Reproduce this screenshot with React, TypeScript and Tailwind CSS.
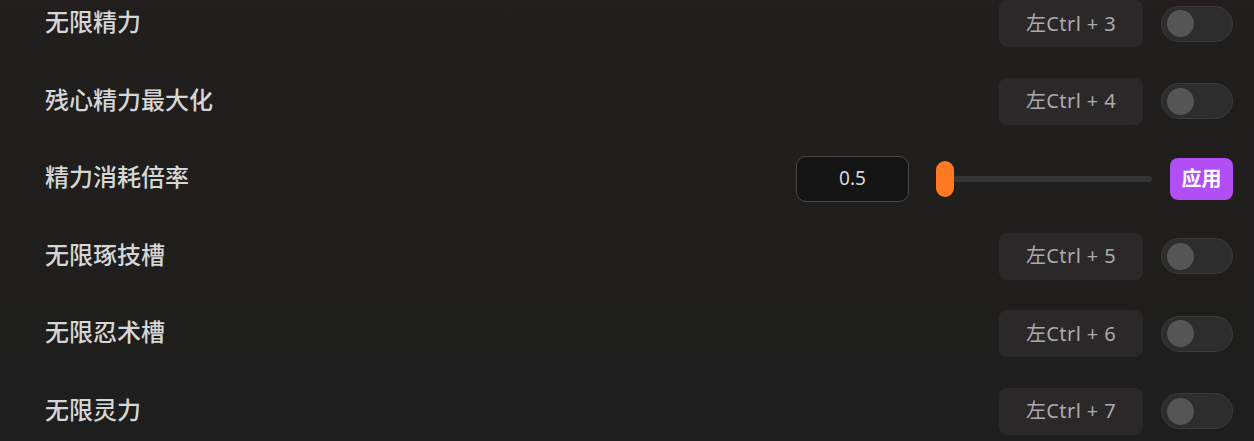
import React from "react";

const font = { fontFamily: '"Noto Sans", "Noto Sans CJK SC", sans-serif' };

function Toggle() {
  return (
    <div className="w-[72px] h-[36px] rounded-full bg-[#2d2d2d] border border-[#3a3a3a] flex items-center pl-[5px] shrink-0">
      <div className="w-[27px] h-[27px] rounded-full bg-[#555555]" />
    </div>
  );
}

function KeyRow({ label, k }: { label: string; k: string }) {
  return (
    <div className="h-[47px] flex items-center">
      <div className="flex-1 text-[24px] leading-none font-medium text-[#d6d6d6] -mt-[3px]">{label}</div>
      <div className="w-[144px] h-[47px] rounded-[8px] bg-[#2a2828] flex items-center justify-center text-[20px] tracking-[0.4px] text-[#ababab]">
        {k}
      </div>
      <div className="w-[18px]" />
      <Toggle />
    </div>
  );
}

function SliderRow() {
  return (
    <div className="h-[47px] flex items-center">
      <div className="flex-1 text-[24px] leading-none font-medium text-[#d6d6d6] -mt-[3px]">精力消耗倍率</div>
      <div className="w-[113px] h-[46px] rounded-[10px] bg-[#141414] border border-[#474747] flex items-center justify-center text-[19px] text-[#d8d8d8]">
        0.5
      </div>
      <div className="w-[27px]" />
      <div className="w-[216px] h-[36px] flex items-center relative">
        <div className="absolute left-[9px] right-0 h-[6px] rounded-full bg-[#343434]" />
        <div className="relative w-[18px] h-[36px] rounded-full bg-[#ff7a21]" />
      </div>
      <div className="w-[18px]" />
      <div className="w-[63px] h-[42px] rounded-[8px] bg-[#b24ef6] flex items-center justify-center text-[20px] font-bold text-white">
        应用
      </div>
    </div>
  );
}

export default function App() {
  return (
    <div
      className="w-[1254px] h-[441px] overflow-hidden bg-gradient-to-b from-[#211e1d] to-[#1e1e1e] pl-[45px] pr-[21px]"
      style={font}
    >
      <div className="flex flex-col gap-[30.6px]">
        <KeyRow label="无限精力" k="左Ctrl + 3" />
        <KeyRow label="残心精力最大化" k="左Ctrl + 4" />
        <SliderRow />
        <KeyRow label="无限琢技槽" k="左Ctrl + 5" />
        <KeyRow label="无限忍术槽" k="左Ctrl + 6" />
        <KeyRow label="无限灵力" k="左Ctrl + 7" />
      </div>
    </div>
  );
}
